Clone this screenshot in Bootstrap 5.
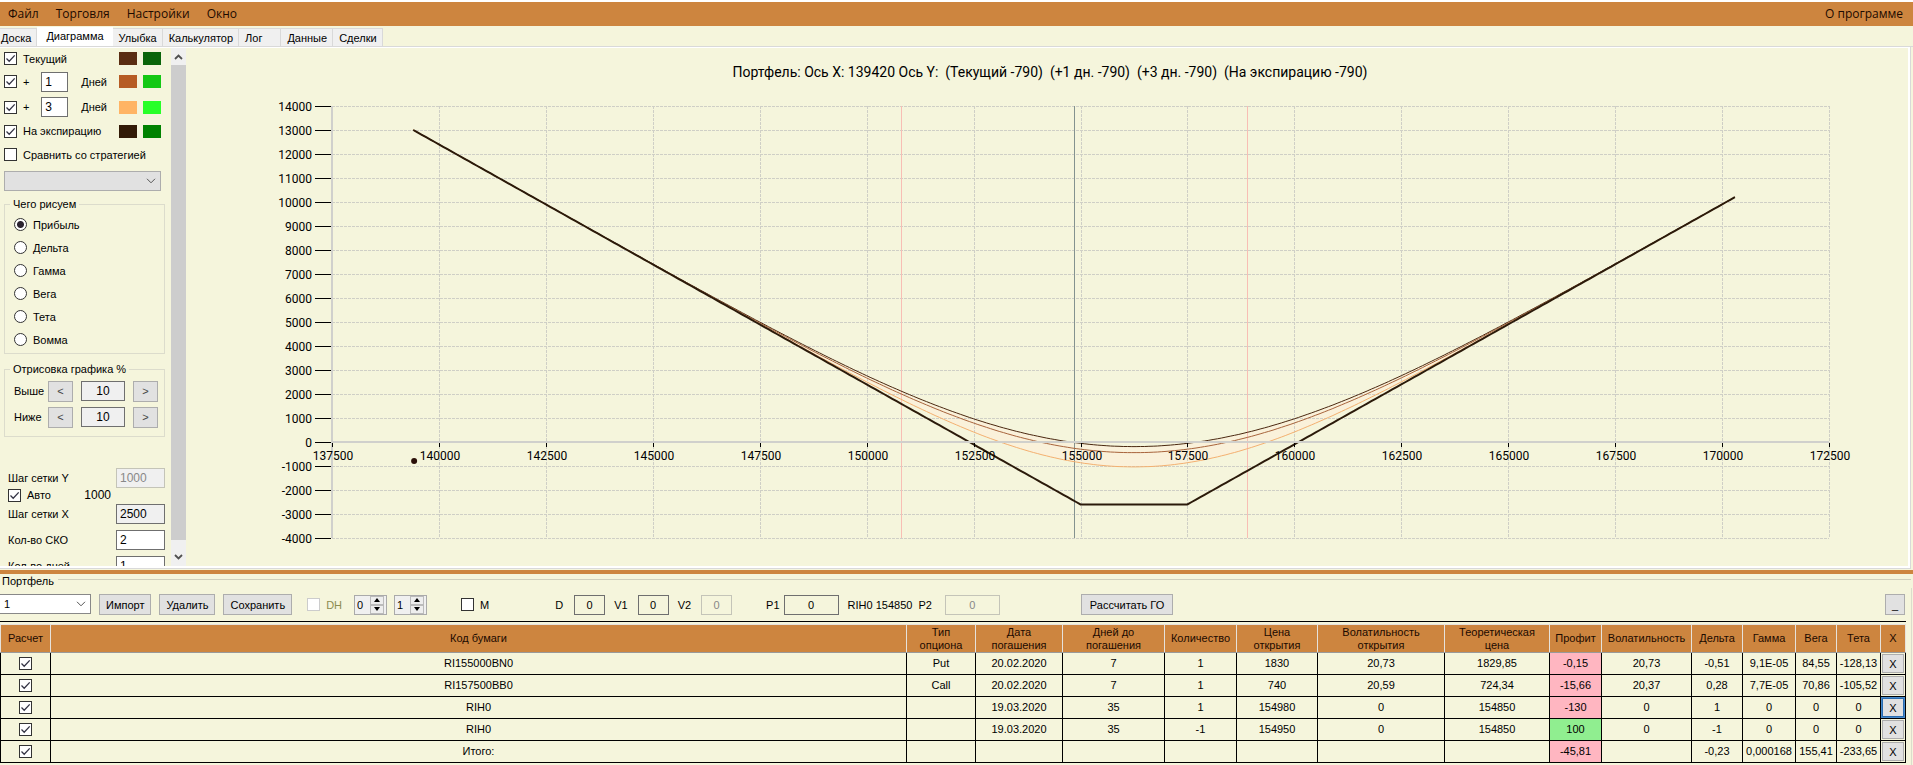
<!DOCTYPE html>
<html lang="ru">
<head>
<meta charset="utf-8">
<meta name="viewport" content="width=device-width, initial-scale=1">
<title>Диаграмма портфеля</title>
<link href="https://cdn.jsdelivr.net/npm/bootstrap@5.3.0/dist/css/bootstrap.min.css" rel="stylesheet">
<style>
  :root { --beige: #f5f5dc; --peru: #cd853f; --btn: #e1e1e1; --edge: #adadad; --line: #dcdccc; }
  body { font: 11px/14px "Liberation Sans", Arial, sans-serif; color: #000; background: var(--beige); height: 100vh; border-top: 2px solid #fff; }
  input, select, button { font: inherit; color: inherit; border-radius: 0; }
  label { cursor: default; }

  .menubar { background: var(--peru); height: 24px; font: 12px/24px "Open Sans", sans-serif; padding: 0 10px 0 8px; }
  .menubar a { color: #1c0a00; text-decoration: none; }
  .menu-list { gap: 17px; }

  .tabstrip { height: 21px; border-bottom: 1px solid #d9d9d9; }
  .tabstrip .nav-link { border: 1px solid #d9d9d9; border-left: 0; border-bottom: 0; background: #f0f0f0; color: #000; padding: 2px 5px 0 6px; margin-top: 2px; height: 18px; border-radius: 0; font-size: 11px; line-height: 14px; }
  .tabstrip .nav-link.active { background: #fff; height: 20px; margin-top: 1px; padding: 2px 9px 0 9px; border: 0; }
  .tabstrip .first-tab { padding-left: 1px; }
  .tabstrip .wide-tab { padding-right: 18px; }

  .tabpage { flex: 1 1 0; border: solid #fff; border-width: 1px 2px 2px 0; outline: 1px solid #d9d9d9; margin-right: 3px; min-height: 420px; }
  .side-holder { overflow: hidden; width: 171px; padding: 0 6px 0 4px; }
  .srow { display: flex; align-items: center; }
  .h21 { height: 21px; } .h22 { height: 22px; } .h23 { height: 23px; } .h25 { height: 25px; } .h26 { height: 26px; }
  .tick + label, .dot + label { margin-left: 6px; }

  .tick { appearance: none; flex: none; width: 13px; height: 13px; margin: 0; border: 1px solid #333; background: #fff; display: inline-block; vertical-align: middle; }
  .tick:checked { background: #fff url("data:image/svg+xml,%3Csvg xmlns='http://www.w3.org/2000/svg' viewBox='0 0 11 11'%3E%3Cpath d='M1.5 5.5 4.2 8.2 9.7 2.4' fill='none' stroke='%23333344' stroke-width='1.3'/%3E%3C/svg%3E") center/11px no-repeat; }
  .tick:disabled { border-color: #ccc; }
  .dot { appearance: none; flex: none; width: 13px; height: 13px; margin: 0; border: 1px solid #333; border-radius: 50%; background: #fff; }
  .dot:checked { background: radial-gradient(circle, #2b2330 3px, #fff 4px); }
  .field { border: 1px solid #6f6f6f; background: #fff; height: 20px; padding: 0 3px; min-width: 0; font-size: 12px; }
  .field.flat { background: #f0f0f0; }
  .field.clear { background: var(--beige); font-size: 11px; }
  .field:disabled { color: #888; border-color: #c4c4b8; opacity: 1; }
  .w27 { width: 27px; } .w31 { width: 31px; } .w44 { width: 44px; } .w49 { width: 49px; } .w55 { width: 55px; }
  .day-field { margin-right: 13px; }
  .day-label { margin-right: 12px; }
  .pair { gap: 6px; margin-right: 4px; }
  .swatch { width: 18px; height: 13px; }
  .combo { appearance: none; border: 1px solid var(--edge); background: var(--btn) url("data:image/svg+xml,%3Csvg xmlns='http://www.w3.org/2000/svg' viewBox='0 0 10 6'%3E%3Cpath d='M1 .8 5 4.8 9 .8' fill='none' stroke='%23555'/%3E%3C/svg%3E") right 4px center/10px 6px no-repeat; height: 20px; padding: 0 4px; }
  .combo.white { background-color: #fff; border-color: #888; }
  .sel { width: 91px; border-left: 0; }
  .group { border: 1px solid var(--line); margin: 6px 0 0; padding: 0 6px 2px 9px; min-width: 0; }
  .group legend { float: none; width: auto; font-size: 11px; line-height: 14px; height: 14px; margin: 0 0 0 -4px; padding: 0 3px; }
  .wbtn { background: var(--btn); border: 1px solid var(--edge); padding: 0; height: 21px; line-height: 14px; }
  .step { width: 25px; color: #444; }
  .rows { padding-top: 2px; }
  .grid-set { padding-top: 30px; }
  .auto-row { height: 12px; }
  .auto-val { margin-right: 54px; font-size: 12px; }

  .sbar { width: 15px; background: #f0f0f0; }
  .sbar button { border: 0; background: none; height: 17px; padding: 0; display: flex; align-items: center; justify-content: center; }
  .sbar .down { height: 26px; padding-top: 8px; }
  .sbar .thumb { background: #cdcdcd; }

  .chart-box { min-width: 0; }
  .chart-title { position: absolute; top: 16px; left: 0; right: 0; padding-left: 6px; font: 14px/16px "Roboto", sans-serif; white-space: pre; }
  #chart { display: block; position: absolute; width: 100%; height: 100%; font: 12px "Roboto", sans-serif; }

  .splitter { height: 4px; background: var(--peru); margin-top: 2px; }
  .pf-legend { gap: 4px; padding-left: 2px; margin-right: 2px; }
  .pf-legend hr { border-color: #b5b5a5; opacity: .6; margin: 0 0 3px; }
  .pf-body { border-right: 1px solid var(--line); margin-right: 1px; padding: 2px 0; }
  .toolbar { height: 31px; padding-right: 6px; }
  .toolbar .wbtn { padding: 0 6px; }
  .toolbar .calc { margin-left: 81px; padding: 0 8px; }
  .tools { margin-left: 15px; height: 21px; }
  .spin { border: 1px solid #aaa; background: #f0f0f0; width: 33px; height: 20px; }
  .spin input { border: 0; background: none; width: 15px; padding: 0 0 0 2px; }
  .spin button { border: 1px solid #bbb; background: #eee; width: 14px; height: 9px; padding: 0; display: flex; align-items: center; justify-content: center; }
  .spin + .spin { margin-left: 7px; }
  .tools .dh { margin: 0 12px 0 6px; color: #8c8c50; }
  .m-box { margin-left: 34px; }
  .tools .lab-m { margin: 0 66px 0 6px; }
  .lab-d { margin-right: 11px; }
  .lab-v { margin: 0 10px 0 9px; }
  .lab-p { margin: 0 4px 0 34px; }
  .quote { margin: 0 6px 0 9px; }
  .lab-p2 { margin-right: 13px; }

  .pf { table-layout: fixed; width: calc(100% - 5px); border-collapse: collapse; border: 1px solid #000; border-left: 0; margin: 0; text-align: center; font-size: 11px; line-height: 13px; color: #000; }
  .pf th { background: var(--peru); font-weight: 400; height: 28px; padding: 0; border: 1px solid #e6e2dc; border-bottom-color: #999; color: #1c0a00; vertical-align: middle; }
  .pf thead { border-top: 1px solid #d8d2e0; }
  .table-frame { border-top: 1px solid #000; padding-top: 2px; margin-right: 5px; }
  .table-frame .pf { width: 100%; }
  .pf td { border: 1px solid #000; height: 22px; padding: 0; vertical-align: middle; white-space: nowrap; }
  .pf td:last-child { padding: 0 1px; }
  .pf .wbtn { width: 100%; height: 19px; display: block; }
  .pf .wbtn.focused { border-color: #2a6cb0; outline: 1px solid #4a8ccc; }
  .neg { background: #ffb6c1; } .pos { background: #90ee90; }
</style>
</head>
<body class="d-flex flex-column">

<nav class="menubar d-flex justify-content-between flex-shrink-0">
  <div class="menu-list d-flex"><a href="#">Файл</a><a href="#">Торговля</a><a href="#">Настройки</a><a href="#">Окно</a></div>
  <a href="#">О программе</a>
</nav>

<nav class="nav flex-nowrap tabstrip flex-shrink-0">
  <a class="nav-link first-tab" href="#">Доска</a>
  <a class="nav-link active" href="#" aria-current="page">Диаграмма</a>
  <a class="nav-link" href="#">Улыбка</a>
  <a class="nav-link" href="#">Калькулятор</a>
  <a class="nav-link wide-tab" href="#">Лог</a>
  <a class="nav-link" href="#">Данные</a>
  <a class="nav-link" href="#">Сделки</a>
</nav>

<main class="tabpage d-flex">
  <form class="side-holder flex-shrink-0">
      <div class="srow h21"><input class="tick" type="checkbox" id="c1" checked><label class="me-auto" for="c1">Текущий</label>
        <span class="pair d-flex"><span class="swatch" style="background:#5a2d12"></span><span class="swatch" style="background:#0a640a"></span></span></div>
      <div class="srow h25"><input class="tick" type="checkbox" id="c2" checked><label class="me-auto" for="c2">+</label>
        <input class="field w27 day-field" id="d1" value="1"><label class="day-label" for="d1">Дней</label>
        <span class="pair d-flex"><span class="swatch" style="background:#b65c24"></span><span class="swatch" style="background:#14c814"></span></span></div>
      <div class="srow h26"><input class="tick" type="checkbox" id="c3" checked><label class="me-auto" for="c3">+</label>
        <input class="field w27 day-field" id="d3" value="3"><label class="day-label" for="d3">Дней</label>
        <span class="pair d-flex"><span class="swatch" style="background:#ffb464"></span><span class="swatch" style="background:#28ff28"></span></span></div>
      <div class="srow h22"><input class="tick" type="checkbox" id="c4" checked><label class="me-auto" for="c4">На экспирацию</label>
        <span class="pair d-flex"><span class="swatch" style="background:#321a06"></span><span class="swatch" style="background:#008200"></span></span></div>
      <div class="srow h25"><input class="tick" type="checkbox" id="c5"><label for="c5">Сравнить со стратегией</label></div>
      <div class="pe-1"><select class="combo w-100 d-block mt-1" aria-label="Стратегия"><option></option></select></div>

      <fieldset class="group">
        <legend>Чего рисуем</legend>
        <div class="rows">
        <div class="srow h23"><input class="dot" type="radio" name="what" id="r1" checked><label for="r1">Прибыль</label></div>
        <div class="srow h23"><input class="dot" type="radio" name="what" id="r2"><label for="r2">Дельта</label></div>
        <div class="srow h23"><input class="dot" type="radio" name="what" id="r3"><label for="r3">Гамма</label></div>
        <div class="srow h23"><input class="dot" type="radio" name="what" id="r4"><label for="r4">Вега</label></div>
        <div class="srow h23"><input class="dot" type="radio" name="what" id="r5"><label for="r5">Тета</label></div>
        <div class="srow h23"><input class="dot" type="radio" name="what" id="r6"><label for="r6">Вомма</label></div>
        </div>
      </fieldset>

      <fieldset class="group mt-2">
        <legend>Отрисовка графика %</legend>
        <div class="rows pb-1">
        <div class="srow h26"><label class="me-auto" for="up">Выше</label><button type="button" class="wbtn step">&lt;</button><input class="field flat w44 mx-2 text-center" id="up" value="10"><button type="button" class="wbtn step">&gt;</button></div>
        <div class="srow h26"><label class="me-auto" for="dn">Ниже</label><button type="button" class="wbtn step">&lt;</button><input class="field flat w44 mx-2 text-center" id="dn" value="10"><button type="button" class="wbtn step">&gt;</button></div>
        </div>
      </fieldset>

      <div class="ps-1 grid-set">
        <div class="srow h22"><label class="me-auto" for="gy">Шаг сетки Y</label><input class="field flat w49" id="gy" value="1000" disabled></div>
        <div class="srow auto-row"><input class="tick" type="checkbox" id="auto" checked><label for="auto">Авто</label><span class="ms-auto auto-val">1000</span></div>
        <div class="srow h26"><label class="me-auto" for="gx">Шаг сетки X</label><input class="field flat w49" id="gx" value="2500"></div>
        <div class="srow h26"><label class="me-auto" for="sko">Кол-во СКО</label><input class="field w49" id="sko" value="2"></div>
        <div class="srow h26"><label class="me-auto" for="days">Кол-во дней</label><input class="field w49" id="days" value="1"></div>
      </div>
  </form>
  <div class="sbar d-flex flex-column flex-shrink-0">
    <button type="button" aria-label="Вверх"><svg width="9" height="6" viewBox="0 0 9 6"><path d="M1 5 4.5 1.5 8 5" fill="none" stroke="#505050" stroke-width="1.8"/></svg></button>
    <div class="thumb flex-fill"></div>
    <button type="button" class="down" aria-label="Вниз"><svg width="9" height="6" viewBox="0 0 9 6"><path d="M1 1 4.5 4.5 8 1" fill="none" stroke="#505050" stroke-width="1.8"/></svg></button>
  </div>
  <section class="chart-box flex-fill position-relative">
    <svg id="chart" role="img" aria-label="График прибыли портфеля"></svg>
    <div class="chart-title text-center">Портфель: Ось X: 139420 Ось Y:  (Текущий -790)  (+1 дн. -790)  (+3 дн. -790)  (На экспирацию -790)</div>
  </section>
</main>

<div class="splitter flex-shrink-0"></div>
<section class="flex-shrink-0">
  <div class="pf-legend d-flex align-items-center"><span>Портфель</span><hr class="flex-fill"></div>
  <div class="pf-body">
    <form class="toolbar d-flex align-items-start pt-1">
      <select class="combo white sel" aria-label="Портфель"><option>1</option></select>
      <button type="button" class="wbtn ms-2">Импорт</button>
      <button type="button" class="wbtn ms-2">Удалить</button>
      <button type="button" class="wbtn ms-2">Сохранить</button>
      <div class="tools d-flex align-items-center">
        <input class="tick" type="checkbox" id="dh" disabled><label class="dh" for="dh">DH</label>
        <span class="spin d-flex align-items-center"><input value="0" aria-label="DH 0"><span><button type="button" aria-label="Больше"><svg width="6" height="4"><path d="M0 4 3 0 6 4z"/></svg></button><button type="button" aria-label="Меньше"><svg width="6" height="4"><path d="M0 0 3 4 6 0z"/></svg></button></span></span>
        <span class="spin d-flex align-items-center"><input value="1" aria-label="DH 1"><span><button type="button" aria-label="Больше"><svg width="6" height="4"><path d="M0 4 3 0 6 4z"/></svg></button><button type="button" aria-label="Меньше"><svg width="6" height="4"><path d="M0 0 3 4 6 0z"/></svg></button></span></span>
        <input class="tick m-box" type="checkbox" id="mm"><label class="lab-m" for="mm">M</label>
        <label class="lab-d" for="fd">D</label><input class="field clear w31 text-center" id="fd" value="0">
        <label class="lab-v" for="v1">V1</label><input class="field clear w31 text-center" id="v1" value="0">
        <label class="lab-v" for="v2">V2</label><input class="field clear w31 text-center" id="v2" value="0" disabled>
        <label class="lab-p" for="p1">P1</label><input class="field clear w55 text-center" id="p1" value="0">
        <span class="quote">RIH0 154850</span>
        <label class="lab-p2" for="p2">P2</label><input class="field clear w55 text-center" id="p2" value="0" disabled>
      </div>
      <button type="button" class="wbtn calc">Рассчитать ГО</button>
      <button type="button" class="wbtn ms-auto">_</button>
    </form>
    <div class="table-frame">
    <table class="pf">
      <colgroup><col style="width:50px"><col><col style="width:69px"><col style="width:87px"><col style="width:102px"><col style="width:72px"><col style="width:81px"><col style="width:127px"><col style="width:105px"><col style="width:52px"><col style="width:90px"><col style="width:51px"><col style="width:53px"><col style="width:41px"><col style="width:44px"><col style="width:25px"></colgroup>
      <thead><tr><th>Расчет</th><th>Код бумаги</th><th>Тип<br>опциона</th><th>Дата<br>погашения</th><th>Дней до<br>погашения</th><th>Количество</th><th>Цена<br>открытия</th><th>Волатильность<br>открытия</th><th>Теоретическая<br>цена</th><th>Профит</th><th>Волатильность</th><th>Дельта</th><th>Гамма</th><th>Вега</th><th>Тета</th><th>X</th></tr></thead>
      <tbody>
        <tr><td><input class="tick" type="checkbox" checked aria-label="Расчет"></td><td>RI155000BN0</td><td>Put</td><td>20.02.2020</td><td>7</td><td>1</td><td>1830</td><td>20,73</td><td>1829,85</td><td class="neg">-0,15</td><td>20,73</td><td>-0,51</td><td>9,1E-05</td><td>84,55</td><td>-128,13</td><td><button type="button" class="wbtn">X</button></td></tr>
        <tr><td><input class="tick" type="checkbox" checked aria-label="Расчет"></td><td>RI157500BB0</td><td>Call</td><td>20.02.2020</td><td>7</td><td>1</td><td>740</td><td>20,59</td><td>724,34</td><td class="neg">-15,66</td><td>20,37</td><td>0,28</td><td>7,7E-05</td><td>70,86</td><td>-105,52</td><td><button type="button" class="wbtn">X</button></td></tr>
        <tr><td><input class="tick" type="checkbox" checked aria-label="Расчет"></td><td>RIH0</td><td></td><td>19.03.2020</td><td>35</td><td>1</td><td>154980</td><td>0</td><td>154850</td><td class="neg">-130</td><td>0</td><td>1</td><td>0</td><td>0</td><td>0</td><td><button type="button" class="wbtn focused">X</button></td></tr>
        <tr><td><input class="tick" type="checkbox" checked aria-label="Расчет"></td><td>RIH0</td><td></td><td>19.03.2020</td><td>35</td><td>-1</td><td>154950</td><td>0</td><td>154850</td><td class="pos">100</td><td>0</td><td>-1</td><td>0</td><td>0</td><td>0</td><td><button type="button" class="wbtn">X</button></td></tr>
        <tr><td><input class="tick" type="checkbox" checked aria-label="Расчет"></td><td>Итого:</td><td></td><td></td><td></td><td></td><td></td><td></td><td></td><td class="neg">-45,81</td><td></td><td>-0,23</td><td>0,000168</td><td>155,41</td><td>-233,65</td><td><button type="button" class="wbtn">X</button></td></tr>
      </tbody>
    </table>
    </div>
  </div>
</section>

<script src="https://cdn.jsdelivr.net/npm/bootstrap@5.3.0/dist/js/bootstrap.bundle.min.js"></script>
<script>
  const K1 = 155000, K2 = 157500, COST = 2600;
  const pdf = z => Math.exp(-z * z / 2) / Math.sqrt(2 * Math.PI);
  const cdf = z => {
    const t = 1 / (1 + 0.2316419 * Math.abs(z));
    const q = pdf(z) * t * (0.31938153 + t * (-0.356563782 + t * (1.781477937 + t * (-1.821255978 + t * 1.330274429))));
    return z > 0 ? 1 - q : q;
  };
  const leg = (m, s) => s ? m * cdf(m / s) + s * pdf(m / s) : Math.max(m, 0);
  const profit = (x, s) => leg(K1 - x, s) + leg(x - K2, s) - COST;

  function draw() {
    const svg = document.getElementById('chart');
    const w = svg.clientWidth, h = svg.clientHeight;
    const L = 146, R = 79, T = 58, B = 28;
    const X = v => L + (v - 137500) / 35000 * (w - L - R);
    const Y = v => T + (14000 - v) / 18000 * (h - T - B);
    const line = (x1, y1, x2, y2, c, extra = '') => `<line x1="${x1}" y1="${y1}" x2="${x2}" y2="${y2}" stroke="${c}" ${extra}/>`;
    const px = v => Math.round(v) + 0.5;
    let o = '';
    const pts = (s, a = 139400, b = 170300) => {
      const p = [];
      for (let x = a; x <= b; x += 100) p.push(X(x).toFixed(1) + ',' + Y(profit(x, s)).toFixed(1));
      return p;
    };
    o += `<polygon points="${pts(4410).concat(pts(3290).reverse()).join(' ')}" fill="#ffeed8" fill-opacity=".5"/>`;
    for (let v = -4000; v <= 14000; v += 1000) {
      const y = px(Y(v));
      o += line(L, y, w - R, y, '#cfcfc6', 'stroke-dasharray="3 1"');
      o += line(L - 17, y, L - 1, y, '#000');
      o += `<text x="${L - 20}" y="${y + 4}" text-anchor="end">${v}</text>`;
    }
    for (let v = 140000; v <= 172500; v += 2500) o += line(px(X(v)), T, px(X(v)), h - B, '#cfcfc6', 'stroke-dasharray="3 1"');
    for (const v of [150800, 158900]) o += line(px(X(v)), T, px(X(v)), h - B, '#f8beb4');
    o += line(px(X(154850)), T, px(X(154850)), h - B, '#84928f');
    for (const [s, c, t] of [[4410, '#4a2810', 1], [4080, '#a8643c', 1], [3290, '#f4b070', 1], [0, '#2b1a0a', 2]])
      o += `<polyline points="${pts(s).join(' ')}" fill="none" stroke="${c}" stroke-width="${t}"/>`;
    o += line(L, Math.round(Y(0)), w - R, Math.round(Y(0)), '#d0d0cc', 'stroke-width="2"');
    o += line(L, T, L, h - B, '#d0d0cc', 'stroke-width="2"');
    for (let v = 137500; v <= 172500; v += 2500) {
      o += line(px(X(v)), Y(0) + 1, px(X(v)), Y(0) + 5, '#000');
      o += `<text x="${Math.round(X(v)) + 1}" y="${Math.round(Y(0)) + 18}" text-anchor="middle">${v}</text>`;
    }
    o += `<circle cx="${X(139420)}" cy="${Y(-790)}" r="3" fill="#2b1008"/>`;
    svg.innerHTML = o;
  }
  draw();
  addEventListener('resize', draw);
</script>
</body>
</html>
